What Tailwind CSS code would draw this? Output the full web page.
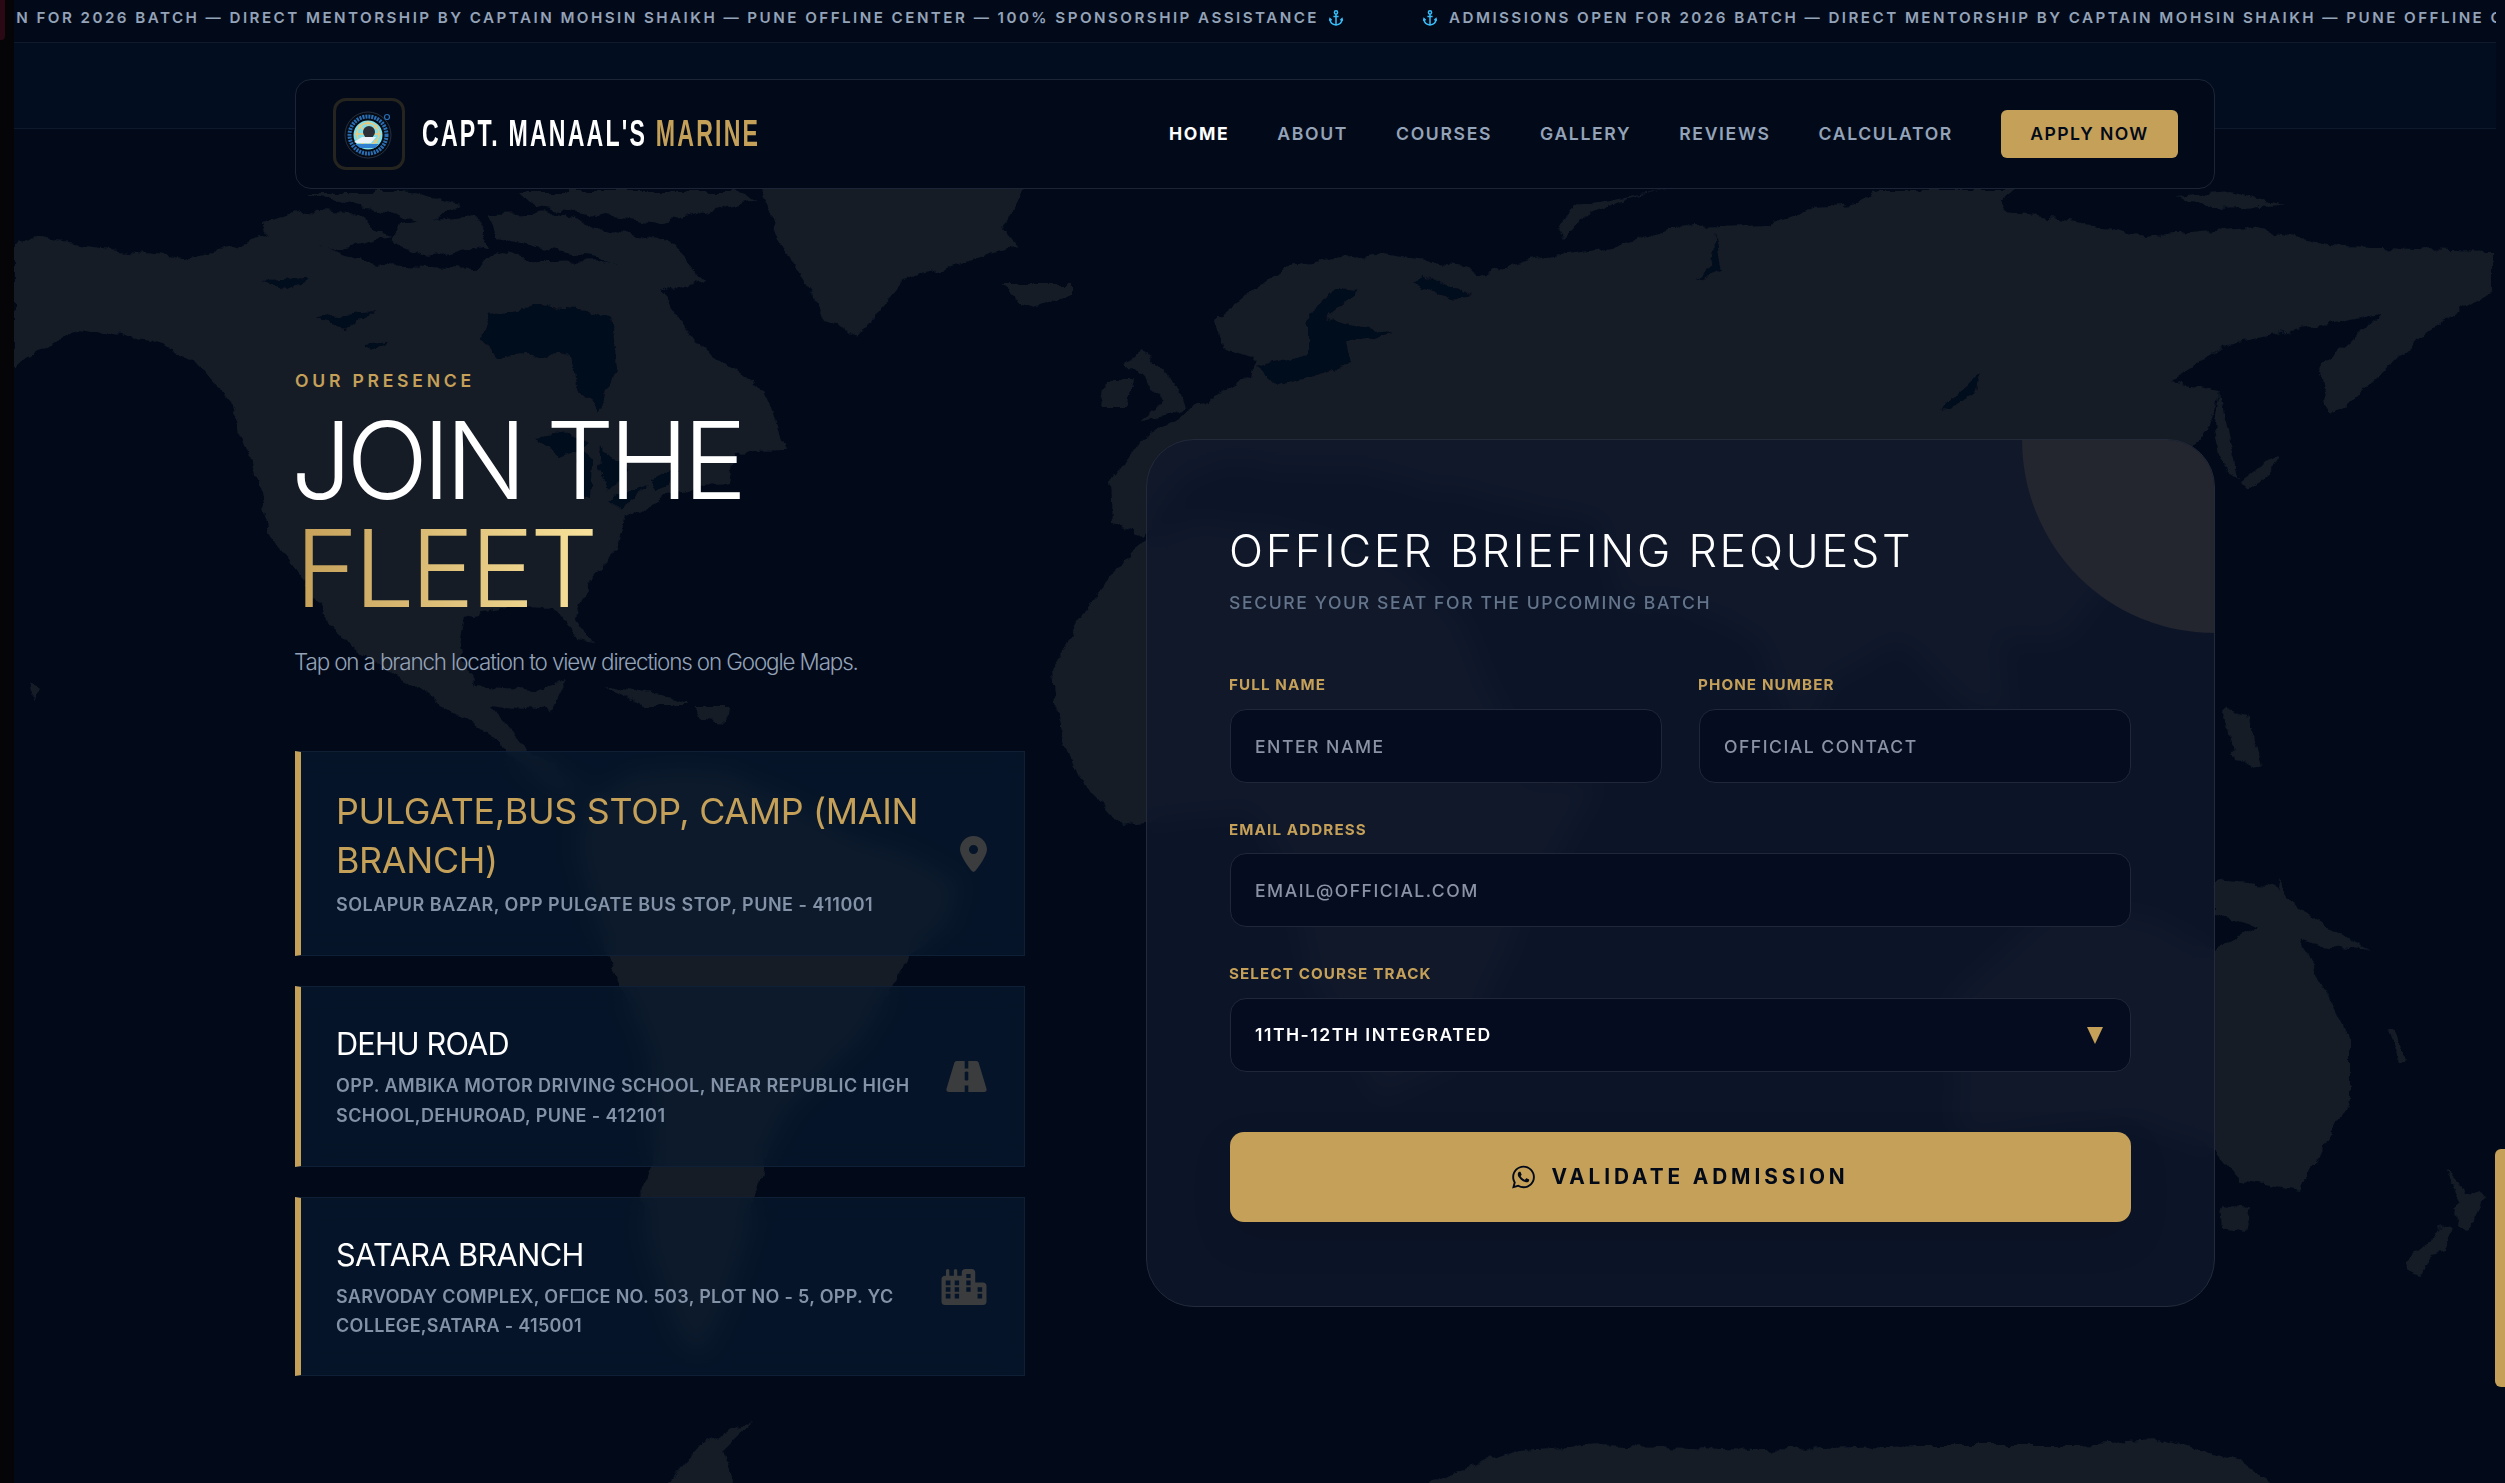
<!DOCTYPE html>
<html lang="en">
<head>
<meta charset="utf-8">
<title>Capt. Manaal's Marine</title>
<script src="https://cdn.jsdelivr.net/npm/@tailwindcss/browser@4"></script>
</head>
<body class="bg-[#020a1a] font-['Inter',sans-serif] overflow-hidden">
<div class="relative flex w-[2505px] h-[1483px] overflow-hidden bg-[#020a1a]">

  <!-- left strip -->
  <div class="relative z-20 w-[14px] shrink-0 bg-[#050508]">
    <div class="w-[5px] h-[40px] bg-[#2a0814] rounded-br-[4px]"></div>
  </div>

  <!-- page -->
  <div class="relative w-[2482px] shrink-0 h-[1483px]">
    <!-- world map backdrop -->
    <svg class="absolute left-[-14px] top-0 w-[2505px] h-[1483px]" viewBox="0 0 2505 1483" aria-hidden="true">
      <defs>
        <filter id="coast" x="-5%" y="-5%" width="110%" height="110%">
          <feTurbulence type="fractalNoise" baseFrequency="0.06" numOctaves="4" seed="7"/>
          <feDisplacementMap in="SourceGraphic" scale="11" xChannelSelector="R" yChannelSelector="G"/>
        </filter>
      </defs>
      <g filter="url(#coast)">
        <g fill="#131b28">
          <!-- North America -->
          <polygon points="14,242 34,237 100,248 184,257 237,246 262,236 306,242 383,265 474,269 497,251 540,262 612,261 658,280 689,337 727,364 765,393 785,450 734,452 729,483 668,493 627,517 617,550 589,582 576,617 594,643 578,640 556,607 510,606 464,617 459,647 474,686 536,690 566,678 551,712 490,705 528,750 590,790 560,800 490,735 413,686 344,640 268,533 260,487 230,402 191,357 138,337 76,330 14,368"/>
          <polygon points="260,223 306,211 360,215 390,238 337,250 268,238"/>
          <polygon points="306,192 405,192 459,204 428,223 360,207"/>
          <polygon points="490,215 558,213 604,230 673,242 704,280 673,292 612,261 551,250 497,238"/>
          <polygon points="520,192 734,192 757,200 658,223 597,215 536,207"/>
          <polygon points="398,223 474,215 490,246 428,257 390,242"/>
          <polygon points="604,686 673,697 689,705 643,705"/>
          <polygon points="695,708 730,708 728,722 700,720"/>
          <polygon points="30,682 40,690 36,700 28,692"/>
          <!-- Greenland / Iceland -->
          <polygon points="757,180 1033,180 1002,227 1018,246 903,280 857,337 826,322 811,292 780,242"/>
          <polygon points="1002,284 1071,284 1071,295 1033,307 1010,297"/>
          <!-- South America -->
          <polygon points="590,800 640,770 720,770 790,800 840,830 900,850 960,880 950,920 911,956 892,986 860,1040 820,1080 780,1120 764,1167 754,1198 745,1250 720,1320 700,1355 680,1340 650,1260 640,1198 652,1167 650,1050 620,986 607,956 590,900 575,840"/>
          <polygon points="751,1422 700,1445 663,1490 735,1490 722,1450"/>
          <!-- Britain / Ireland -->
          <polygon points="1144,350 1182,394 1187,408 1139,423 1163,399 1125,363"/>
          <polygon points="1105,381 1134,381 1125,408 1101,408"/>
          <!-- Eurasia -->
          <polygon points="1110,484 1144,437 1211,399 1250,376 1254,359 1221,350 1216,318 1288,265 1374,254 1470,267 1480,276 1528,260 1614,247 1672,229 1768,225 1816,207 1998,193 2008,211 2084,222 2142,236 2248,227 2344,247 2492,251 2492,292 2425,332 2344,408 2329,414 2320,367 2382,314 2228,343 2171,381 2219,390 2209,430 2150,480 2130,560 2060,640 2000,640 2010,720 1960,700 1900,640 1830,680 1800,740 1760,640 1680,600 1620,600 1600,520 1500,500 1400,480 1350,470 1280,470 1230,460 1180,480 1144,537 1112,522"/>
          <polygon points="1557,225 1576,207 1672,189 1624,200 1585,216 1566,238"/>
          <polygon points="1817,222 1880,190 2014,190 1990,210 1900,225"/>
          <polygon points="2175,197 2230,192 2283,205 2220,208"/>
          <polygon points="2219,390 2224,417 2238,479 2219,457 2214,421"/>
          <polygon points="2238,484 2262,464 2280,456 2270,474 2246,492"/>
          <polygon points="2224,710 2250,716 2262,770 2236,760"/>
          <!-- Africa -->
          <polygon points="1139,544 1106,582 1077,622 1053,671 1058,729 1077,774 1120,825 1250,810 1290,870 1310,980 1380,1100 1460,1060 1520,920 1600,780 1530,780 1460,620 1400,560 1280,530 1200,520"/>
          <!-- Oceania -->
          <polygon points="1950,1000 2060,900 2150,920 2215,950 2270,920 2280,880 2310,960 2350,1040 2350,1100 2300,1190 2240,1180 2215,1150 2130,1120 2040,1130 1960,1140"/>
          <polygon points="2215,880 2270,885 2330,930 2370,950 2320,945 2270,930 2215,915"/>
          <polygon points="2220,1205 2250,1208 2245,1232 2222,1228"/>
          <polygon points="2388,1030 2394,1032 2406,1062 2400,1062"/>
          <polygon points="2444,1168 2457,1181 2463,1191 2485,1196 2480,1208 2467,1230 2458,1226 2452,1210 2460,1203 2455,1190"/>
          <polygon points="2442,1223 2453,1228 2445,1250 2432,1253 2422,1275 2412,1273 2405,1260 2422,1246 2435,1236"/>
          <!-- Antarctica -->
          <polygon points="1406,1490 1518,1450 1598,1445 1758,1450 1918,1445 2077,1445 2157,1440 2237,1460 2285,1490"/>
        </g>
        <!-- water cut-outs -->
        <g fill="#020a1a">
          <polygon points="482,337 490,315 536,307 589,311 612,318 617,370 597,413 590,400 575,385 570,352 497,357"/>
          <polygon points="535,437 570,432 590,445 560,455"/>
          <polygon points="580,450 592,460 590,500 578,495"/>
          <polygon points="600,445 630,470 610,490 598,470"/>
          <polygon points="610,500 650,485 620,510"/>
          <polygon points="650,480 680,470 680,480 655,490"/>
          <polygon points="262,280 310,278 290,292"/>
          <polygon points="315,318 375,312 345,330"/>
          <polygon points="362,345 388,342 372,352"/>
          <polygon points="1336,287 1360,289 1326,318 1393,334 1345,343 1350,363 1278,385 1254,367 1307,354 1307,323"/>
          <polygon points="1422,274 1470,296 1451,300 1413,283"/>
          <polygon points="1940,410 1979,374 1974,392 1950,411"/>
          <polygon points="1715,234 1722,270 1694,280 1712,268"/>
        </g>
      </g>
    </svg>

    <!-- band behind the nav -->
    <div class="absolute inset-x-0 top-[42px] h-[87px] bg-[#020e20] border-y border-[#0e1a2c]"></div>

    <div class="relative flex flex-col">
      <!-- ticker -->
      <div class="flex items-center h-[42px] pb-[5px] overflow-hidden bg-[#020a1a] text-[15.2px] font-semibold tracking-[2.45px] text-[#94a3b8] whitespace-nowrap">
        <div class="flex items-center justify-end gap-[10px] w-[1329px] shrink-0 overflow-hidden">
          <span class="shrink-0">ADMISSIONS OPEN FOR 2026 BATCH — DIRECT MENTORSHIP BY CAPTAIN MOHSIN SHAIKH — PUNE OFFLINE CENTER — 100% SPONSORSHIP ASSISTANCE</span>
          <svg class="shrink-0 w-[14px] h-[16px]" viewBox="0 0 14 16" fill="none" stroke="#38bdf8" stroke-width="1.5"><circle cx="7" cy="2.4" r="1.6"/><path d="M7 4v11M4.4 6.4h5.2M1 9.5c.2 3.4 3 5 6 5.4 3-.4 5.8-2 6-5.4"/><path d="M.4 10.8 1 8.6l1.7 1.6M13.6 10.8 13 8.6l-1.7 1.6"/></svg>
        </div>
        <div class="flex items-center gap-[10px] ml-[80px] shrink-0">
          <svg class="shrink-0 w-[14px] h-[16px]" viewBox="0 0 14 16" fill="none" stroke="#38bdf8" stroke-width="1.5"><circle cx="7" cy="2.4" r="1.6"/><path d="M7 4v11M4.4 6.4h5.2M1 9.5c.2 3.4 3 5 6 5.4 3-.4 5.8-2 6-5.4"/><path d="M.4 10.8 1 8.6l1.7 1.6M13.6 10.8 13 8.6l-1.7 1.6"/></svg>
          <span class="ml-[2px]">ADMISSIONS OPEN FOR 2026 BATCH — DIRECT MENTORSHIP BY CAPTAIN MOHSIN SHAIKH — PUNE OFFLINE CENTER — 100% SPONSORSHIP ASSISTANCE</span>
        </div>
      </div>

      <div class="mx-auto w-[1920px]">
        <!-- nav -->
        <nav class="mt-[37px] flex items-center justify-between h-[110px] pl-[37px] pr-[36px] rounded-[16px] border border-[#1b2535] bg-[#020a1a]">
          <div class="flex items-center gap-[17px]">
            <div class="flex items-center justify-center w-[72px] h-[72px] rounded-[13px] border-[3px] border-[#26241f] bg-[#020a1a]">
              <svg class="w-[50px] h-[50px]" viewBox="0 0 50 50">
                <circle cx="24" cy="26" r="23" fill="#060a12" stroke="#2e3a4a" stroke-width=".8"/>
                <circle cx="24" cy="26" r="18.5" fill="none" stroke="#2a6fb5" stroke-width="4" stroke-dasharray="2 1" />
                <circle cx="24" cy="26" r="14.5" fill="#7fdfea"/>
                <g stroke="#f0c878" stroke-width="1.4" fill="none">
                  <circle cx="24" cy="25" r="11"/>
                  <path d="M24 12v26M11 25h26M15 16l18 18M33 16 15 34"/>
                </g>
                <circle cx="25" cy="23" r="6" fill="#2b3038"/>
                <path d="M10 33 18 28h14l-5 6H13z" fill="#e8f2f8"/>
                <path d="M11 35h24l-4 4H16z" fill="#2f80d0"/>
                <circle cx="43" cy="8" r="2.5" fill="none" stroke="#2a6fb5" stroke-width="1.2"/>
              </svg>
            </div>
            <div class="w-[337px] h-[36px] whitespace-nowrap">
              <span class="inline-block origin-left scale-x-[.643] font-['Liberation_Sans',sans-serif] font-bold text-[36px] leading-none tracking-[3.4px] text-white">CAPT. MANAAL'S <span class="text-[#c5a059]">MARINE</span></span>
            </div>
          </div>
          <div class="flex items-center gap-[48px] text-[17.6px] font-semibold tracking-[1.65px] text-[#94a3b8] whitespace-nowrap">
            <a class="text-white font-bold">HOME</a>
            <a>ABOUT</a>
            <a>COURSES</a>
            <a>GALLERY</a>
            <a>REVIEWS</a>
            <a>CALCULATOR</a>
            <button class="w-[177px] h-[48px] rounded-[6px] bg-[#c5a059] text-[#020a1a] text-[17.6px] font-semibold tracking-[1.4px]">APPLY NOW</button>
          </div>
        </nav>

        <!-- content -->
        <div class="mt-[175px] flex items-center justify-between">
          <section class="w-[730px]">
            <p class="pt-[4px] text-[17.6px] leading-[26px] font-semibold tracking-[3.75px] text-[#c5a059]">OUR PRESENCE</p>
            <h1 class="mt-[12px] text-[107.5px] leading-[108px] font-light tracking-[-5.5px] text-white"><span class="inline-block -ml-[4px]">JOIN THE</span><br><span class="inline-block bg-gradient-to-r from-[#c5a059] to-[#f8e29b] bg-clip-text text-transparent tracking-[-4.2px]">FLEET</span></h1>
            <p class="mt-[22px] -ml-[1px] text-[22.4px] leading-[35px] font-light tracking-[-1.12px] text-[#94a3b8]">Tap on a branch location to view directions on Google Maps.</p>

            <div class="mt-[72px] flex flex-col gap-[30px]">
              <a class="flex items-center justify-between pl-[35px] pr-[37px] py-[35px] border border-[#0f2036] border-l-[6px] border-l-[#c5a059] bg-[#081a30]/65 backdrop-blur-md">
                <div>
                  <h3 class="text-[35.8px] leading-[48.5px] font-normal tracking-[-.3px] text-[#c5a059]">PULGATE,BUS STOP, CAMP (MAIN<br>BRANCH)</h3>
                  <p class="mt-[6px] text-[18px] leading-[30px] font-semibold tracking-[.48px] text-[#8492a8]">SOLAPUR BAZAR, OPP PULGATE BUS STOP, PUNE - 411001</p>
                </div>
                <svg class="w-[27px] h-[36px] shrink-0" viewBox="0 0 384 512" fill="#3a3c3e"><path d="M215.7 499.2C267 435 384 279.4 384 192C384 86 298 0 192 0S0 86 0 192c0 87.4 117 243 168.3 307.2c12.3 15.3 35.1 15.3 47.4 0zM192 128a64 64 0 1 1 0 128 64 64 0 1 1 0-128z" fill-rule="evenodd"/></svg>
              </a>
              <a class="flex items-center justify-between pl-[35px] pr-[37px] py-[35px] border border-[#0f2036] border-l-[6px] border-l-[#c5a059] bg-[#081a30]/65 backdrop-blur-md">
                <div>
                  <h3 class="text-[30.7px] leading-[43px] font-normal tracking-[-.85px] text-white">DEHU ROAD</h3>
                  <p class="mt-[6px] text-[18px] leading-[30px] font-semibold tracking-[.42px] text-[#8492a8]">OPP. AMBIKA MOTOR DRIVING SCHOOL, NEAR REPUBLIC HIGH<br>SCHOOL,DEHUROAD, PUNE - 412101</p>
                </div>
                <svg class="w-[41px] h-[31px] shrink-0" viewBox="0 0 41 31" fill="#3a3c3e"><path fill-rule="evenodd" d="M10.5 0H18.7V7.5H22.3V0H30.5Q32 0 32.6 1.5L40.6 28Q41 31 38 31H22.3V24.5H18.7V31H3Q0 31 .4 28L8.4 1.5Q9 0 10.5 0ZM18.7 11Q20.5 10 22.3 11V19Q20.5 20 18.7 19Z"/></svg>
              </a>
              <a class="flex items-center justify-between pl-[35px] pr-[37px] py-[35px] border border-[#0f2036] border-l-[6px] border-l-[#c5a059] bg-[#081a30]/65 backdrop-blur-md">
                <div>
                  <h3 class="text-[30.7px] leading-[43px] font-normal tracking-[-.6px] text-white">SATARA BRANCH</h3>
                  <p class="mt-[6px] text-[18px] leading-[29px] font-semibold tracking-[.3px] text-[#8492a8]">SARVODAY COMPLEX, OF□CE NO. 503, PLOT NO - 5, OPP. YC<br>COLLEGE,SATARA - 415001</p>
                </div>
                <svg class="w-[46px] h-[36px] shrink-0" viewBox="0 0 640 512" fill="#3a3c3e"><path fill-rule="evenodd" d="M480 48C480 21 459 0 432 0H336C309 0 288 21 288 48V96H224V24C224 11 213 0 200 0S176 11 176 24V96H112V24C112 11 101 0 88 0S64 11 64 24V96H48C21 96 0 117 0 144V464C0 491 21 512 48 512H592C619 512 640 491 640 464V240C640 213 619 192 592 192H480ZM61 165H127V230H61ZM188 165H250V230H188ZM353 165H414V230H353ZM353 70H414V127H353ZM61 259H127V324H61ZM188 259H250V324H188ZM353 259H414V324H353ZM513 259H578V324H513ZM61 353H127V419H61ZM188 353H250V419H188ZM513 353H578V419H513Z"/></svg>
              </a>
            </div>
          </section>

          <!-- form -->
          <section class="relative mt-[6px] w-[1069px] h-[868px] overflow-hidden rounded-[48px] border border-[#232b3a] bg-[#0f182c]/80 backdrop-blur-md px-[83px] pt-[81px]">
            <div class="absolute top-0 right-0 w-[192px] h-[193px] rounded-bl-[100%] bg-[#23252f]"></div>
            <h2 class="relative -ml-[1px] text-[44.8px] leading-[60px] font-light tracking-[2.75px] text-white">OFFICER BRIEFING REQUEST</h2>
            <p class="relative -ml-[1px] mt-[9px] text-[17.6px] leading-[26px] font-medium tracking-[1.6px] text-[#64748b]">SECURE YOUR SEAT FOR THE UPCOMING BATCH</p>
            <div class="mt-[59px] grid grid-cols-2 gap-x-[37px]">
              <label class="block">
                <span class="block -ml-[1px] text-[15.2px] leading-[20px] font-bold tracking-[1.1px] text-[#c5a059]">FULL NAME</span>
                <input class="mt-[14px] block w-full h-[74px] rounded-[16px] border border-[#1f2738] bg-[#060c20] px-[24px] text-[17.6px] font-medium tracking-[1.5px] text-white placeholder:text-[#8a93a5]" placeholder="ENTER NAME">
              </label>
              <label class="block">
                <span class="block -ml-[1px] text-[15.2px] leading-[20px] font-bold tracking-[1.1px] text-[#c5a059]">PHONE NUMBER</span>
                <input class="mt-[14px] block w-full h-[74px] rounded-[16px] border border-[#1f2738] bg-[#060c20] px-[24px] text-[17.6px] font-medium tracking-[1.5px] text-white placeholder:text-[#8a93a5]" placeholder="OFFICIAL CONTACT">
              </label>
            </div>
            <label class="mt-[37px] block">
              <span class="block -ml-[1px] text-[15.2px] leading-[20px] font-bold tracking-[1.1px] text-[#c5a059]">EMAIL ADDRESS</span>
              <input class="mt-[13px] block w-full h-[74px] rounded-[16px] border border-[#1f2738] bg-[#060c20] px-[24px] text-[17.6px] font-medium tracking-[1.5px] text-white placeholder:text-[#8a93a5]" placeholder="EMAIL@OFFICIAL.COM">
            </label>
            <div class="mt-[37px]">
              <span class="block -ml-[1px] text-[15.2px] leading-[20px] font-bold tracking-[1.1px] text-[#c5a059]">SELECT COURSE TRACK</span>
              <div class="mt-[14px] flex items-center justify-between h-[74px] rounded-[16px] border border-[#1f2738] bg-[#060c20] pl-[24px] pr-[27px] text-[17.6px] font-semibold tracking-[1.5px] text-white">
                <span>11TH-12TH INTEGRATED</span>
                <svg class="w-[16px] h-[17px]" viewBox="0 0 16 17" fill="#c5a059"><polygon points="0,0 16,0 8,17"/></svg>
              </div>
            </div>
            <button class="mt-[60px] flex items-center justify-center gap-[16px] w-full h-[90px] rounded-[14px] bg-[#c5a059] text-[20.8px] font-bold tracking-[3.9px] text-[#020a1a] shadow-[0_16px_40px_rgba(0,0,0,0.12)]">
              <svg class="w-[23px] h-[26px]" viewBox="0 0 448 512" fill="#020a1a"><path d="M380.9 97.1C339 55.1 283.2 32 223.9 32c-122.4 0-222 99.6-222 222 0 39.1 10.2 77.3 29.6 111L0 480l117.7-30.9c32.4 17.7 68.9 27 106.1 27h.1c122.3 0 224.1-99.6 224.1-222 0-59.3-25.2-115-67.1-157zm-157 341.6c-33.2 0-65.7-8.9-94-25.7l-6.7-4-69.8 18.3L72 359.2l-4.4-7c-18.5-29.4-28.2-63.3-28.2-98.2 0-101.7 82.8-184.5 184.6-184.5 49.3 0 95.6 19.2 130.4 54.1 34.8 34.9 56.2 81.2 56.1 130.5 0 101.8-84.9 184.6-186.6 184.6zm101.2-138.2c-5.5-2.8-32.8-16.2-37.9-18-5.1-1.9-8.8-2.8-12.5 2.8-3.7 5.6-14.3 18-17.6 21.8-3.2 3.7-6.5 4.2-12 1.4-32.6-16.3-54-29.1-75.5-66-5.7-9.8 5.7-9.1 16.3-30.3 1.8-3.7.9-6.9-.5-9.7-1.4-2.8-12.5-30.1-17.1-41.2-4.5-10.8-9.1-9.3-12.5-9.5-3.2-.2-6.9-.2-10.6-.2-3.7 0-9.7 1.4-14.8 6.9-5.1 5.6-19.4 19-19.4 46.3 0 27.3 19.9 53.7 22.6 57.4 2.8 3.7 39.1 59.7 94.8 83.8 35.2 15.2 49 16.5 66.6 13.9 10.7-1.6 32.8-13.4 37.4-26.4 4.6-13 4.6-24.1 3.2-26.4-1.3-2.5-5-3.9-10.5-6.6z"/></svg>
              VALIDATE ADMISSION
            </button>
          </section>
        </div>
      </div>
    </div>
  </div>

  <!-- scroll thumb -->
  <div class="absolute right-0 top-[1149px] w-[10px] h-[238px] rounded-l-[6px] bg-[#c5a059] z-20"></div>
</div>
</body>
</html>
